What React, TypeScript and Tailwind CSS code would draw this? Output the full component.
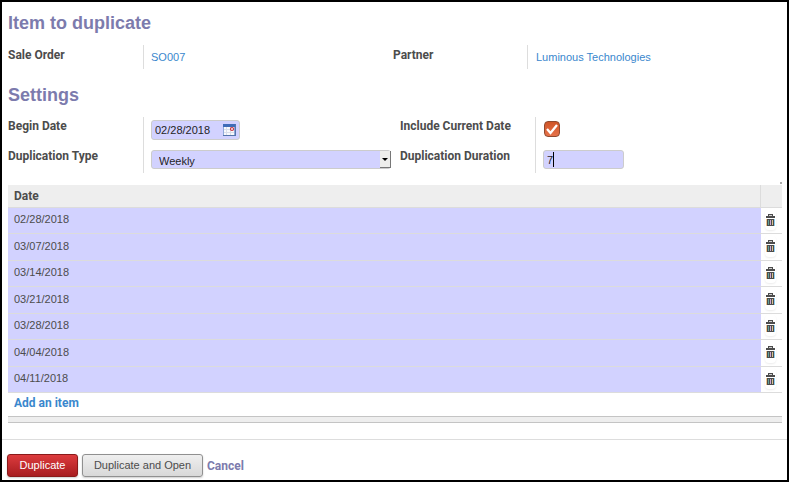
import { useState, type ReactNode } from "react";

const initialDates = [
  "02/28/2018",
  "03/07/2018",
  "03/14/2018",
  "03/21/2018",
  "03/28/2018",
  "04/04/2018",
  "04/11/2018",
];

function Heading({ children }: { children: ReactNode }) {
  return <h2 className="text-[18px] leading-6 font-bold text-[#7c7bad]">{children}</h2>;
}

function TrashIcon() {
  return (
    <svg width="9" height="12" viewBox="0 0 9 12" shapeRendering="crispEdges" aria-hidden="true">
      <path d="M2 0h5v2h2v2H0V2h2z" fill="#4c4c4c" />
      <path d="M3 1h3v1H3z" fill="#d0d0d0" />
      <path d="M1 5h7v7H1z" fill="#4c4c4c" />
      <path d="M2 6h1v5H2z" fill="#5fa09a" />
      <path d="M4 6h1v5H4z" fill="#c9a6d6" />
      <path d="M6 6h1v5H6z" fill="#d8c08f" />
      <path d="M0 5h1v7H0z" fill="#f3c58b" />
      <path d="M8 5h1v7H8z" fill="#8fd0f3" />
    </svg>
  );
}

function CalendarIcon() {
  return (
    <svg width="13" height="12" viewBox="0 0 13 12" className="block" aria-hidden="true">
      <path d="M0 0h13v12H0z" fill="#8fa9da" />
      <path d="M0 0h13v3H0z" fill="#3f6cb8" />
      <path d="M1 3h10v8H1z" fill="#f8f9fc" />
      <path d="M1 5.500h10M1 8.500h10M3.500 3v8M7.500 3v8" stroke="#d9deea" />
      <path d="M12 0h1v12H0v-1h12z" fill="#5575ab" />
      <circle cx="9" cy="5" r="1.500" fill="#fff" stroke="#c62f3d" strokeWidth="1.200" />
    </svg>
  );
}

export default function App() {
  const [dates, setDates] = useState(initialDates);
  const [include, setInclude] = useState(true);

  return (
    <div className="min-h-screen border-2 border-black bg-white pt-2 font-['Liberation_Sans',Arial,sans-serif] text-[11px] text-[#4c4c4c]">
      <form onSubmit={(e) => e.preventDefault()}>
        <div className="pt-px pr-[5px] pl-[6px]">
          <Heading>Item to duplicate</Heading>
          <dl className="mt-[10px] grid grid-cols-[385fr_389fr]">
            <div className="flex h-6">
              <dt className="w-[135px] pt-[2px] font-[Roboto,sans-serif] text-xs leading-4 font-bold">Sale Order</dt>
              <dd className="border-l border-[#ddd] pt-1 pl-[7px] leading-4">
                <a href="#sale-order" className="text-[#3a87cd]">SO007</a>
              </dd>
            </div>
            <div className="flex h-6">
              <dt className="w-[134px] pt-[2px] font-[Roboto,sans-serif] text-xs leading-4 font-bold">Partner</dt>
              <dd className="border-l border-[#ddd] pt-1 pl-2 leading-4">
                <a href="#partner" className="text-[#3a87cd]">Luminous Technologies</a>
              </dd>
            </div>
          </dl>

          <div className="mt-[14px]">
            <Heading>Settings</Heading>
          </div>
          <div className="mt-[10px] grid grid-cols-[392fr_382fr]">
            <div className="flex h-14">
              <div className="w-[135px] font-[Roboto,sans-serif] text-xs leading-4 font-bold">
                <label htmlFor="begin" className="mt-px block">Begin Date</label>
                <label htmlFor="type" className="mt-[14px] block">Duplication Type</label>
              </div>
              <div className="grow border-l border-[#ddd] pt-[3px] pr-[9px] pl-[7px]">
                <div className="flex h-5 w-[89px] items-center rounded-[3px] border border-[#ccc] bg-[#d2d2ff] pr-[3px]">
                  <input id="begin" defaultValue="02/28/2018" className="w-0 grow pl-[3px] text-[11px] text-[#1f1f1f] outline-none" />
                  <button type="button" aria-label="Pick a date"><CalendarIcon /></button>
                </div>
                <div className="relative mt-[10px] h-[19px]">
                  <select id="type" defaultValue="Weekly" className="block h-full w-full appearance-none rounded-[3px] border border-[#ccc] bg-[#d2d2ff] pt-[2px] pl-[7px] text-[11px] leading-4 text-[#1f1f1f] outline-none">
                    <option>Daily</option>
                    <option>Weekly</option>
                    <option>Monthly</option>
                  </select>
                  <span className="pointer-events-none absolute inset-y-px right-0 flex w-[11px] items-center justify-center border-r border-b border-[#777] bg-[#eeeeec]">
                    <svg width="6" height="3" viewBox="0 0 6 3" aria-hidden="true"><path d="M0 0h6L3 3z" /></svg>
                  </span>
                </div>
              </div>
            </div>
            <div className="flex h-14">
              <div className="w-[135px] font-[Roboto,sans-serif] text-xs leading-4 font-bold">
                <label htmlFor="include" className="mt-px block">Include Current Date</label>
                <label htmlFor="duration" className="mt-[14px] block">Duplication Duration</label>
              </div>
              <div className="border-l border-[#ddd] pt-1 pl-[7px]">
                <div className="relative ml-px size-4">
                  <input id="include" type="checkbox" checked={include} onChange={(e) => setInclude(e.target.checked)} className="block size-4 appearance-none rounded-[4px] border border-[#8f4a30] bg-linear-to-b from-[#cf5527] to-[#e6724a]" />
                  {include && (
                    <svg className="pointer-events-none absolute inset-0" width="16" height="16" viewBox="0 0 16 16" aria-hidden="true">
                      <path d="M3 8l3.500 4L13 4" fill="none" stroke="#fff" strokeWidth="2.300" />
                    </svg>
                  )}
                </div>
                <div className="relative mt-[13px] h-[19px] w-[81px]">
                  <input id="duration" defaultValue="7" className="block h-full w-full rounded-[3px] border border-[#ccc] bg-[#d2d2ff] pl-[3px] text-[11px] text-[#1f1f1f] outline-none" />
                  <span className="pointer-events-none absolute top-[2px] left-[10px] h-[15px] w-px bg-black" />
                </div>
              </div>
            </div>
          </div>

          <div className="mt-[9px] flex h-[3px] justify-end"><span className="size-[2px] bg-[#aaa]" /></div>
          <table className="w-full border-separate border-spacing-0 text-left">
            <thead>
              <tr className="h-[23px] bg-[#eee]">
                <th className="border-r border-b border-[#dcdcdc] pl-[6px] font-[Roboto,sans-serif] text-xs leading-4 font-bold">Date</th>
                <th className="w-[21px] border-b border-[#dcdcdc]" aria-label="Delete" />
              </tr>
            </thead>
            <tbody>
              {dates.map((date) => (
                <tr key={date} className="h-[26px] even:h-[27px]">
                  <td className="border-b border-[#dcdcdc] bg-[#d2d2ff] pb-[3px] pl-[6px] leading-4">{date}</td>
                  <td className="w-[21px] border-b border-[#dcdcdc] pb-[2px]">
                    <button type="button" aria-label={"Delete " + date} onClick={() => setDates(dates.filter((d) => d !== date))} className="ml-[4px] flex h-[21px] w-[11px] items-center justify-center rounded-[4px] shadow-[0_1px_2px_rgba(0,0,0,0.08)]">
                      <TrashIcon />
                    </button>
                  </td>
                </tr>
              ))}
            </tbody>
          </table>
          <div className="flex h-[23px] items-center pb-[3px] pl-[6px]">
            <a href="#add" className="font-[Roboto,sans-serif] text-xs leading-4 font-bold text-[#3a87cd]">Add an item</a>
          </div>
          <div className="h-[7px] border-y border-[#c4c4c4] bg-[#eee]" />
        </div>
        <footer className="mt-4 flex items-center border-t border-[#ddd] pt-[14px] pl-[5px]">
          <button type="submit" className="h-[23px] w-[71px] rounded-[3px] border border-[#8a1a1a] bg-linear-to-b from-[#dc3b3e] to-[#a81c1f] text-[11px] text-white shadow-[0_1px_2px_rgba(0,0,0,0.2)]">Duplicate</button>
          <button type="button" className="ml-1 h-[23px] w-[121px] rounded-[3px] border border-[#909090] bg-linear-to-b from-[#efefef] to-[#d8d8d8] text-[11px] shadow-[0_1px_2px_rgba(0,0,0,0.2)]">Duplicate and Open</button>
          <a href="#cancel" className="ml-1 font-[Roboto,sans-serif] text-xs leading-4 font-bold text-[#7c7bad]">Cancel</a>
        </footer>
      </form>
    </div>
  );
}
